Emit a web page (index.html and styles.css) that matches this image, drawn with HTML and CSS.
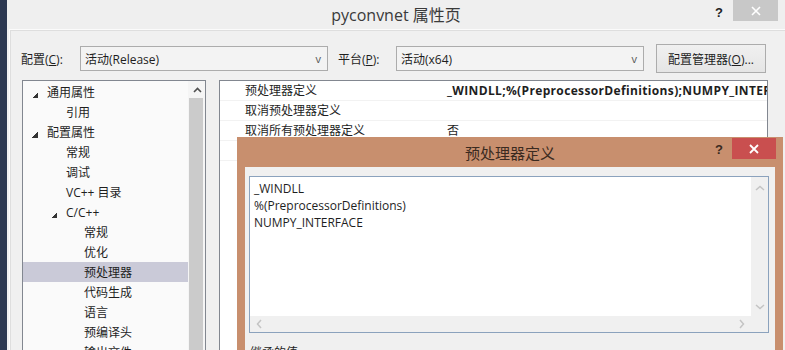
FILE: index.html
```html
<!DOCTYPE html>
<html lang="zh-CN">
<head>
    <meta charset="UTF-8">
    <title>pyconvnet 属性页</title>
    <link rel="stylesheet" href="styles.css">
</head>
<body>
<div class="window">
    <div class="titlebar">
        <div></div>
        <div class="title">pyconvnet 属性页</div>
        <div class="caption">
            <span class="help">?</span>
            <span class="close grey">
                <svg width="10" height="10" viewBox="0 0 10 10"><path d="M1 1 L9 9 M9 1 L1 9" stroke="#fff" stroke-width="1.6"/></svg>
            </span>
        </div>
    </div>

    <div class="panel">
        <div class="toolbar">
            <label class="lbl lbl-config">配置(<u>C</u>):</label>
            <div class="select"><span>活动(Release)</span><span class="arrow">v</span></div>
            <label class="lbl lbl-platform">平台(<u>P</u>):</label>
            <div class="select"><span>活动(x64)</span><span class="arrow">v</span></div>
            <button class="btn">配置管理器(<u>O</u>)...</button>
        </div>

        <div class="main">
            <div class="tree">
                <ul class="tree-list">
                    <li class="l0"><i class="tri"></i>通用属性</li>
                    <li class="l1"><i></i>引用</li>
                    <li class="l0"><i class="tri"></i>配置属性</li>
                    <li class="l1"><i></i>常规</li>
                    <li class="l1"><i></i>调试</li>
                    <li class="l1"><i></i>VC++ 目录</li>
                    <li class="l1"><i class="tri"></i>C/C++</li>
                    <li class="l2"><i></i>常规</li>
                    <li class="l2"><i></i>优化</li>
                    <li class="l2 selected"><i></i>预处理器</li>
                    <li class="l2"><i></i>代码生成</li>
                    <li class="l2"><i></i>语言</li>
                    <li class="l2"><i></i>预编译头</li>
                    <li class="l2"><i></i>输出文件</li>
                </ul>
                <div class="vscroll">
                    <div class="up">
                        <svg width="9" height="6" viewBox="0 0 9 6"><path d="M1 5 L4.5 1.5 L8 5" fill="none" stroke="#505050" stroke-width="1.6"/></svg>
                    </div>
                    <div class="thumb"></div>
                </div>
            </div>

            <div class="grid">
                <div class="row">
                    <div class="name">预处理器定义</div>
                    <div class="value bold">_WINDLL;%(PreprocessorDefinitions);NUMPY_INTERFACE</div>
                </div>
                <div class="row">
                    <div class="name">取消预处理器定义</div>
                    <div class="value"></div>
                </div>
                <div class="row">
                    <div class="name">取消所有预处理器定义</div>
                    <div class="value">否</div>
                </div>
                <div class="row">
                    <div class="name"></div>
                    <div class="value"></div>
                </div>
            </div>
        </div>
    </div>

    <!-- dialog floats over the property page -->
    <div class="dialog">
        <div class="dlg-titlebar">
            <div></div>
            <div class="dlg-title">预处理器定义</div>
            <div class="caption">
                <span class="help dlg-help">?</span>
                <span class="close red">
                    <svg width="10" height="10" viewBox="0 0 10 10"><path d="M1 1 L9 9 M9 1 L1 9" stroke="#fff" stroke-width="1.8"/></svg>
                </span>
            </div>
        </div>
        <div class="dlg-body">
            <div class="editbox">
                <div class="edit-text">
                    <div>_WINDLL</div>
                    <div>%(PreprocessorDefinitions)</div>
                    <div>NUMPY_INTERFACE</div>
                </div>
                <div class="edit-vscroll">
                    <svg width="10" height="6" viewBox="0 0 10 6"><path d="M1 5 L5 1.5 L9 5" fill="none" stroke="#c4c4c4" stroke-width="1.5"/></svg>
                    <svg width="10" height="6" viewBox="0 0 10 6"><path d="M1 1 L5 4.5 L9 1" fill="none" stroke="#c4c4c4" stroke-width="1.5"/></svg>
                </div>
                <div class="edit-hscroll">
                    <svg width="6" height="10" viewBox="0 0 6 10"><path d="M5 1 L1.5 5 L5 9" fill="none" stroke="#c4c4c4" stroke-width="1.5"/></svg>
                    <svg width="6" height="10" viewBox="0 0 6 10"><path d="M1 1 L4.5 5 L1 9" fill="none" stroke="#c4c4c4" stroke-width="1.5"/></svg>
                </div>
                <div class="edit-corner"></div>
            </div>
            <div class="inherit">继承的值:</div>
        </div>
    </div>
</div>
</body>
</html>
```

FILE: styles.css
```css
body {
    margin: 0;
    font-family: "Open Sans", "Noto Sans CJK SC", sans-serif;
    font-size: 12px;
    color: #1e1e1e;
    background: #f0f0f0;
}

.window {
    position: relative;
    width: 778px;
    height: 350px;
    overflow: hidden;
    border-left: 7px solid #2c3851;
    background: #f0f0f0;
}

/* title bar */

.titlebar {
    display: grid;
    grid-template-columns: 1fr auto 1fr;
    height: 29px;
    background: #efefef;
}

.title {
    font-size: 16px;
    line-height: 31px;
    color: #3a3a3a;
}

.caption {
    display: flex;
    justify-content: flex-end;
    align-items: flex-start;
}

.help {
    font-family: "Liberation Sans", sans-serif;
    font-weight: bold;
    font-size: 13px;
    color: #222;
    margin-top: 5px;
    margin-right: 10px;
}

.close {
    display: flex;
    align-items: center;
    justify-content: center;
    width: 45px;
    height: 21px;
}

.close.grey {
    background: #c8c8c8;
    margin-right: 7px;
}

/* page */

.panel {
    margin-left: 2px;
    border-top: 1px solid #fbfbfb;
    border-left: 1px solid #fbfbfb;
    box-shadow: inset 1px 1px 0 #dedede;
    height: 330px;
}

.toolbar {
    display: flex;
    align-items: center;
    height: 29px;
    margin-top: 14px;
}

.lbl {
    font-size: 12px;
}

.lbl-config {
    margin-left: 11px;
    width: 59px;
}

.lbl-platform {
    margin-left: 10px;
    width: 58px;
}

.select {
    display: flex;
    justify-content: space-between;
    align-items: center;
    box-sizing: border-box;
    width: 248px;
    height: 25px;
    padding: 0 6px 0 4px;
    border: 1px solid #acacac;
    background: #f3f3f3;
}

.select .arrow {
    font-size: 11px;
    color: #555;
}

.btn {
    box-sizing: border-box;
    width: 110px;
    height: 29px;
    margin-left: 12px;
    padding: 0;
    font-family: inherit;
    font-size: 12px;
    color: #1e1e1e;
    border: 1px solid #acacac;
    background: linear-gradient(#f0f0f0, #e5e5e5);
}

.main {
    display: flex;
    margin-top: 7px;
}

/* tree */

.tree {
    display: flex;
    width: 182px;
    height: 290px;
    margin-left: 12px;
    border: 1px solid #828790;
    background: #fafafa;
}

.tree-list {
    flex: 1;
    list-style: none;
    margin: 0;
    padding: 1px 0 0;
}

.tree-list li {
    display: flex;
    align-items: center;
    height: 20px;
    white-space: nowrap;
}

.tree-list li i {
    display: inline-block;
    width: 15px;
    height: 20px;
    flex: none;
}

.tree-list li i.tri {
    background: linear-gradient(135deg, transparent 50%, #333 50%) no-repeat 0 10px / 6px 6px;
}

.l0 { padding-left: 9px; }
.l1 { padding-left: 28px; }
.l2 { padding-left: 46px; }

.tree-list li.selected {
    background: #cacad8;
}

.vscroll {
    width: 17px;
    background: #f5f5f5;
}

.vscroll .up {
    display: flex;
    justify-content: center;
    align-items: center;
    height: 17px;
    padding-left: 1px;
}

.vscroll .thumb {
    width: 14px;
    height: 260px;
    margin-left: 1px;
    background: #cbcbcb;
}

/* property grid */

.grid {
    width: 547px;
    height: 290px;
    margin-left: 13px;
    border: 1px solid #828790;
    border-bottom: none;
    background: #fff;
}

.grid .row {
    display: grid;
    grid-template-columns: 223px 1fr;
    height: 19px;
    line-height: 19px;
    border-bottom: 1px solid #f2f2f2;
}

.grid .name {
    padding-left: 25px;
}

.grid .value {
    padding-left: 4px;
    overflow: hidden;
    white-space: nowrap;
}

.grid .value.bold {
    font-weight: bold;
    letter-spacing: 0.35px;
}

/* dialog */

.dialog {
    position: absolute;
    left: 230px;
    top: 137px;
    width: 530px;
    height: 230px;
    padding: 0 8px;
    background: #c88f6e;
}

.dlg-titlebar {
    display: grid;
    grid-template-columns: 1fr auto 1fr;
    height: 30px;
}

.dlg-title {
    font-size: 15px;
    line-height: 32px;
    color: #3a2a20;
}

.dlg-help {
    margin-top: 5px;
    margin-right: 9px;
    color: #3a2a20;
}

.close.red {
    background: #c94f4f;
    width: 44px;
    height: 21px;
    margin-top: 1px;
    margin-right: -1px;
}

.dlg-body {
    height: 200px;
    padding: 9px 6px 0 4px;
    background: #f0f0f0;
}

.editbox {
    display: grid;
    grid-template-columns: 1fr 17px;
    grid-template-rows: 139px 16px;
    border: 1px solid #8ba2bd;
    background: #fff;
}

.edit-text {
    padding: 3px 4px 0;
    line-height: 17px;
}

.edit-vscroll {
    display: flex;
    flex-direction: column;
    justify-content: space-between;
    align-items: center;
    padding: 8px 0 6px;
    background: #f0f0f0;
}

.edit-hscroll {
    display: flex;
    justify-content: space-between;
    align-items: center;
    padding: 0 6px;
    background: #f0f0f0;
}

.edit-corner {
    background: #f0f0f0;
}

.inherit {
    margin-top: 10px;
    padding-left: 1px;
}
```
